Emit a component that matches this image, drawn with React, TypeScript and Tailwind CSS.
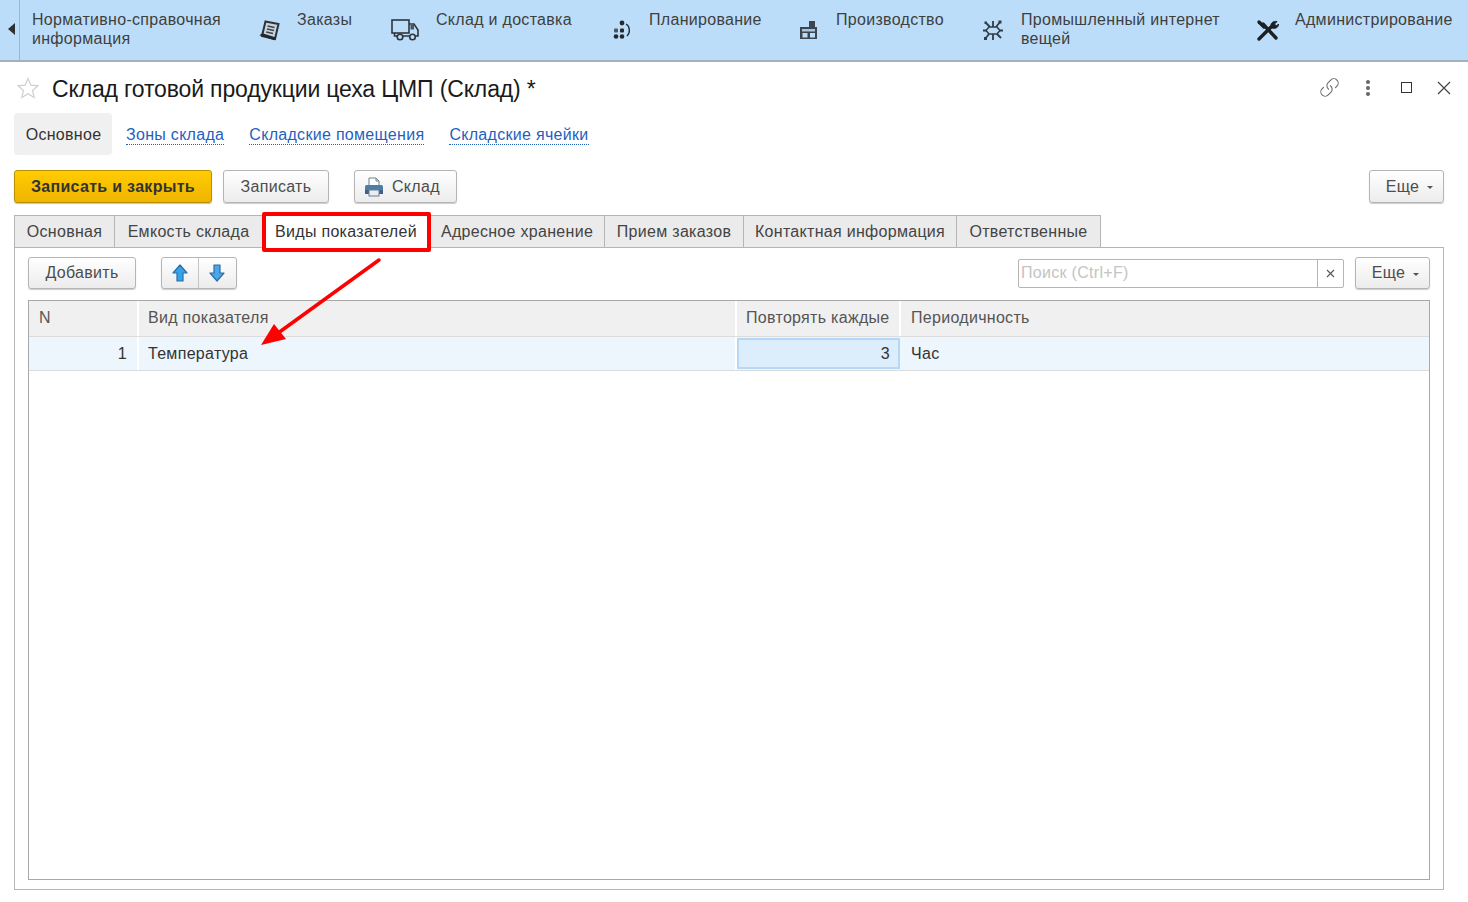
import { Link as LinkIcon } from "lucide-react";

const font = "font-['Liberation_Sans',Arial,sans-serif]";

function OrdersIcon() {
  return (
    <svg width="24" height="24" viewBox="0 0 24 24" fill="none">
      <path d="M7.5 3.5 L20.5 6 L17 21 L4 18 Z" fill="#c9d3dc" stroke="#2b3239" strokeWidth="2" />
      <path d="M9.5 8 L16.5 9.5 M9 11 L16 12.5 M8.2 14 L15 15.5" stroke="#3a4450" strokeWidth="1.6" />
      <path d="M3 17 L16 21.5 L17 20 L4.5 16 Z" fill="#22282e" stroke="#22282e" strokeWidth="1.4" />
    </svg>
  );
}

function TruckIcon() {
  return (
    <svg width="28" height="22" viewBox="0 0 28 22" fill="none">
      <rect x="1" y="1" width="17" height="13" fill="#bbddf9" stroke="#2f353b" strokeWidth="1.6" />
      <path d="M18 5 H23 L27 11 V17 H24" stroke="#2f353b" strokeWidth="1.6" />
      <rect x="19.5" y="6" width="3.5" height="4.5" fill="#4a5560" />
      <path d="M3.500 14 V17 H6 M12 17 H19" stroke="#2f353b" strokeWidth="1.6" />
      <circle cx="9" cy="18" r="2.800" fill="#bbddf9" stroke="#2f353b" strokeWidth="1.6" />
      <circle cx="21.500" cy="18" r="2.800" fill="#bbddf9" stroke="#2f353b" strokeWidth="1.6" />
    </svg>
  );
}

function PlanIcon() {
  return (
    <svg width="20" height="20" viewBox="0 0 20 20" fill="#23282d">
      <circle cx="10" cy="3" r="2.400" />
      <rect x="2" y="8.500" width="4" height="4" rx="1" fill="#4c5660" />
      <rect x="8" y="8.500" width="4" height="4" rx="1" />
      <circle cx="4" cy="16.500" r="2.300" />
      <circle cx="10" cy="16.500" r="2.300" />
      <path d="M14 4 C18 6 18.500 13 15 16" fill="none" stroke="#23282d" strokeWidth="1.300" />
    </svg>
  );
}

function FactoryIcon() {
  return (
    <svg width="20" height="20" viewBox="0 0 20 20" fill="none">
      <path d="M10 7 V1 H16 V7 H18 V19 H1 V7 Z" fill="#3c4651" />
      <rect x="3" y="9" width="13" height="2.500" fill="#a9c4dc" />
      <rect x="3.500" y="13" width="5" height="4.500" fill="#bbddf9" />
      <rect x="11" y="13" width="5" height="4.500" fill="#bbddf9" />
    </svg>
  );
}

function IotIcon() {
  return (
    <svg width="22" height="22" viewBox="0 0 22 22" fill="none" stroke="#333c45">
      <path d="M7 8 H15 L18 11.500 L15 15 H7 L4 11.500 Z" strokeWidth="1.500" />
      <path d="M11 2 V8 M11 15 V21 M1 11.500 H5 M17 11.500 H21 M4 4 L8 8 M18 3 L14 8 M3 20 L7 15 M19 19 L15 15" strokeWidth="1.800" />
      <rect x="16.500" y="1.500" width="3" height="3" fill="#333c45" stroke="none" />
      <rect x="2" y="18" width="3" height="3" fill="#333c45" stroke="none" />
      <rect x="2.500" y="2.500" width="2.500" height="2.500" fill="#333c45" stroke="none" />
    </svg>
  );
}

function ToolsIcon() {
  return (
    <svg width="24" height="24" viewBox="0 0 24 24" fill="none" stroke="#1c2024" strokeLinecap="round">
      <path d="M7 6 L20 20" strokeWidth="3.400" />
      <path d="M3 21 L15 9" strokeWidth="3.400" />
      <path d="M3 4 L8 9" strokeWidth="3.400" />
      <path d="M15 9 C14 5 17 3 21 3.500 L18.500 6 L20.500 8 L22.500 6 C22.500 10 19 11 16 10 Z" fill="#1c2024" strokeWidth="1" />
    </svg>
  );
}

function PrinterIcon() {
  return (
    <svg width="20" height="20" viewBox="0 0 20 20">
      <path d="M5 1 H12 L15 4 V9 H5 Z" fill="#fff" stroke="#6f7f8e" strokeWidth="1" />
      <path d="M12 1 V4 H15" fill="none" stroke="#6f7f8e" strokeWidth="1" />
      <rect x="1" y="8" width="18" height="8" rx="1.500" fill="#4d7ca6" />
      <rect x="1" y="13" width="18" height="4" fill="#3a6288" />
      <rect x="5" y="13" width="10" height="6" fill="#e9eef2" stroke="#6f7f8e" strokeWidth="1" />
    </svg>
  );
}

function MoveIcon({ down }: { down?: boolean }) {
  return (
    <svg width="16" height="18" viewBox="0 0 16 18" className={down ? "rotate-180" : ""}>
      <path d="M8 1 L15 9 H11 V17 H5 V9 H1 Z" fill={down ? "#4da6e8" : "#35a3ea"} stroke="#2a6ea6" strokeWidth="1.200" strokeLinejoin="round" />
    </svg>
  );
}

const btn =
  "flex items-center justify-center rounded-[3px] border border-[#b5b5b5] bg-gradient-to-b from-white to-[#ececec] text-[#4d4d4d] shadow-[0_1px_1px_rgba(0,0,0,0.2)]";

function MoreButton({ className }: { className: string }) {
  return (
    <div className={`${btn} pl-[6px] ${className}`}>
      Еще
      <span className="ml-[8px] mt-[2px] border-x-[3px] border-t-[3px] border-x-transparent border-t-[#555]" />
    </div>
  );
}

const tabs = [
  { label: "Основная", w: "w-[101px]" },
  { label: "Емкость склада", w: "w-[148px]" },
  { label: "Виды показателей", w: "w-[167px]", active: true },
  { label: "Адресное хранение", w: "w-[175px]" },
  { label: "Прием заказов", w: "w-[139px]" },
  { label: "Контактная информация", w: "w-[213px]" },
  { label: "Ответственные", w: "w-[144px]" },
];

export default function App() {
  return (
    <div className={`relative h-[902px] w-[1468px] overflow-hidden bg-white text-[16px] tracking-[0.3px] text-[#333] ${font}`}>
      <header className="flex h-[62px] border-b-[2px] border-[#a4b0ba] bg-[#bbddf9] text-[#3f3f3f]">
        <div className="flex h-[60px] w-[20px] shrink-0 items-center justify-center border-r border-[#9fb6c9] pb-[2px] pl-[4px]">
          <span className="border-y-[6px] border-r-[7px] border-y-transparent border-r-[#2b3137]" />
        </div>
        <div className="flex whitespace-nowrap pt-[10px] leading-[19px]">
          <div className="ml-[12px] w-[189px]">
            Нормативно-справочная
            <br />
            информация
          </div>
          <div className="ml-[35px] flex h-[40px] w-[28px] items-center justify-center"><OrdersIcon /></div>
          <div className="ml-[13px] w-[55px]">Заказы</div>
          <div className="ml-[39px] flex h-[40px] w-[28px] items-center justify-center"><TruckIcon /></div>
          <div className="ml-[17px] w-[137px]">Склад и доставка</div>
          <div className="ml-[35px] flex h-[40px] w-[28px] items-center justify-center"><PlanIcon /></div>
          <div className="ml-[13px] w-[111px]">Планирование</div>
          <div className="ml-[35px] flex h-[40px] w-[28px] items-center justify-center"><FactoryIcon /></div>
          <div className="ml-[13px] w-[109px]">Производство</div>
          <div className="ml-[34px] flex h-[40px] w-[28px] items-center justify-center"><IotIcon /></div>
          <div className="ml-[14px] w-[198px]">
            Промышленный интернет
            <br />
            вещей
          </div>
          <div className="ml-[35px] flex h-[40px] w-[28px] items-center justify-center"><ToolsIcon /></div>
          <div className="ml-[13px]">Администрирование</div>
        </div>
      </header>

      <main className="pl-[14px] pr-[24px]">
        <div className="flex h-[51px] items-center">
          <svg width="26" height="24" viewBox="0 0 24 24" fill="none" stroke="#cfcfcf" strokeWidth="1.200" className="ml-[1px]">
            <path d="M12 2.500 L14.800 9.200 L22 9.800 L16.500 14.500 L18.200 21.500 L12 17.700 L5.800 21.500 L7.500 14.500 L2 9.800 L9.200 9.200 Z" />
          </svg>
          <h1 className="ml-[11px] pt-[4px] text-[23px] font-normal tracking-[-0.15px] text-[#1a1a1a]">Склад готовой продукции цеха ЦМП (Склад) *</h1>
          <div className="ml-auto flex items-center text-[#666]">
            <LinkIcon size={21} strokeWidth={1.200} className="-scale-x-100 rotate-90" />
            <div className="ml-[26px] flex flex-col gap-[2px]">
              <span className="size-[4px] rounded-full bg-[#666]" />
              <span className="size-[4px] rounded-full bg-[#666]" />
              <span className="size-[4px] rounded-full bg-[#666]" />
            </div>
            <span className="ml-[31px] size-[11px] border border-[#333]" />
            <svg width="14" height="14" viewBox="0 0 14 14" stroke="#444" strokeWidth="1.200" className="ml-[25px] mr-[-7px]">
              <path d="M1 1 L13 13 M13 1 L1 13" />
            </svg>
          </div>
        </div>

        <div className="flex items-center">
          <div className="flex h-[42px] w-[98px] items-center justify-center rounded-[4px] bg-[#f0f0f0] pl-[1px] pt-[1px]">Основное</div>
          {["Зоны склада", "Складские помещения", "Складские ячейки"].map((link, i) => (
            <span
              key={link}
              className={`${i === 0 ? "ml-[14px]" : "ml-[25px]"} mt-[2px] border-b border-dotted border-[#1f5fbf] leading-[18px] text-[#1f5fbf]`}
            >
              {link}
            </span>
          ))}
        </div>

        <div className="mt-[15px] flex h-[33px] items-center">
          <div className="flex h-[33px] w-[198px] items-center justify-center rounded-[3px] border border-[#b89000] bg-gradient-to-b from-[#ffcc00] to-[#f0b400] font-bold text-[#333] shadow-[0_1px_1px_rgba(0,0,0,0.25)]">
            Записать и закрыть
          </div>
          <div className={`${btn} ml-[11px] h-[33px] w-[106px]`}>Записать</div>
          <div className={`${btn} ml-[25px] h-[33px] w-[103px] !justify-start pl-[9px]`}>
            <PrinterIcon />
            <span className="ml-[8px]">Склад</span>
          </div>
          <MoreButton className="ml-auto h-[33px] w-[75px]" />
        </div>

        <div className="mt-[12px] flex h-[33px]">
          {tabs.map((tab) => (
            <div
              key={tab.label}
              className={`flex shrink-0 items-center justify-center whitespace-nowrap border border-l-0 border-[#b5b5b5] first:border-l ${tab.w} ${
                tab.active ? "h-[33px] border-b-0 bg-white" : "h-[33px] bg-[#ebebeb] text-[#444]"
              }`}
            >
              {tab.label}
            </div>
          ))}
          <div className="flex-1 border-b border-[#b5b5b5]" />
        </div>

        <section className="flex h-[642px] flex-col border border-t-0 border-[#b5b5b5] px-[13px] pt-[9px]">
          <div className="flex h-[32px] items-center">
            <div className={`${btn} h-[32px] w-[108px]`}>Добавить</div>
            <div className={`${btn} ml-[25px] h-[32px] w-[76px]`}>
              <div className="flex h-full w-[37px] items-center justify-center border-r border-[#c4c4c4]"><MoveIcon /></div>
              <div className="flex h-full flex-1 items-center justify-center pr-[1px]"><MoveIcon down /></div>
            </div>
            <div className="ml-auto flex h-[29px] w-[326px] rounded-[2px] border border-[#b5b5b5]">
              <div className="flex-1 truncate pl-[2px] leading-[25px] text-[#c4c4c4]">Поиск (Ctrl+F)</div>
              <div className="flex w-[26px] items-center justify-center border-l border-[#b5b5b5]">
                <svg width="9" height="9" viewBox="0 0 9 9" stroke="#555" strokeWidth="1.100">
                  <path d="M1 1 L8 8 M8 1 L1 8" />
                </svg>
              </div>
            </div>
            <MoreButton className="ml-[11px] h-[32px] w-[75px]" />
          </div>

          <div className="mt-[11px] flex h-[580px] flex-col border border-[#a8a8a8]">
            <div className="flex h-[36px] border-b border-[#dcdcdc] bg-[#f0f0f0] text-[#555]">
              <div className="flex w-[110px] items-center border-r-[2px] border-white pb-[2px] pl-[10px]">N</div>
              <div className="flex w-[598px] items-center border-r-[2px] border-white pb-[2px] pl-[9px]">Вид показателя</div>
              <div className="flex w-[164px] items-center whitespace-nowrap border-r-[2px] border-white pb-[2px] pl-[9px]">Повторять каждые</div>
              <div className="flex flex-1 items-center pb-[2px] pl-[10px]">Периодичность</div>
            </div>
            <div className="flex h-[34px] items-center border-b border-[#dcdcdc] bg-[#edf5fd]">
              <div className="flex h-full w-[110px] items-center justify-end border-r-[2px] border-white pr-[10px]">1</div>
              <div className="flex h-full w-[598px] items-center border-r-[2px] border-white pl-[9px]">Температура</div>
              <div className="mr-[1px] flex h-[31px] w-[163px] items-center justify-end border-[2px] border-[#b5d8f7] bg-[#dcedfc] pr-[8px]">3</div>
              <div className="flex h-full flex-1 items-center pl-[10px]">Час</div>
            </div>
          </div>
        </section>
      </main>

      {/* красная рамка и стрелка поверх скриншота */}
      <div className="pointer-events-none absolute left-[262px] top-[212px] h-[40px] w-[169px] rounded-[2px] border-[4px] border-[#fe0000]" />
      <svg className="pointer-events-none absolute left-[250px] top-[250px]" width="140" height="105" viewBox="0 0 140 105">
        <path d="M129 10 L24 86" stroke="#fe0000" strokeWidth="3.500" strokeLinecap="round" />
        <path d="M11 95 L24 74 L36 89 Z" fill="#fe0000" />
      </svg>
    </div>
  );
}
